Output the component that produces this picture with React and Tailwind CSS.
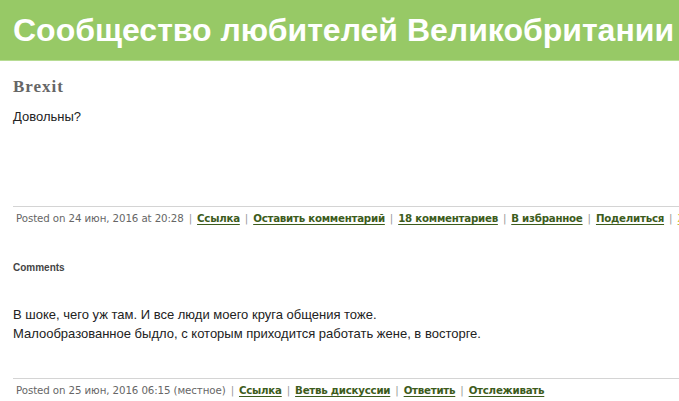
import React from 'react';

const sans = "font-['Liberation_Sans',Arial,sans-serif]";
const verdana = "font-['DejaVu_Sans',Verdana,sans-serif]";

const MetaLink = ({ children, extra }) => (
  <a href="#" className={`font-bold underline underline-offset-2 tracking-[-0.25px] ${extra ? 'text-[#c9c23a]' : 'text-[#3d5c1c]'}`}>
    {children}
  </a>
);

const Sep = () => <span className="px-[5px] text-[#999]">|</span>;

const Meta = ({ posted, links, extra }) => (
  <div className="ml-[13px] border-t border-[#d4d4d4] pt-[4px] pl-[3px] overflow-hidden">
    <div className={`${verdana} text-[10.25px] leading-[14px] text-[#666] whitespace-nowrap tracking-[-0.1px]`}>
      <span>{posted}</span>
      {links.map((l, i) => (
        <React.Fragment key={i}>
          <Sep />
          <MetaLink>{l}</MetaLink>
        </React.Fragment>
      ))}
      {extra && (
        <>
          <Sep />
          <MetaLink extra>{extra}</MetaLink>
        </>
      )}
    </div>
  </div>
);

export default function App() {
  return (
    <div className="w-[679px] h-[401px] overflow-hidden bg-white">
      <header className="h-[61px] bg-[#97c966] border-b border-[#b7dc94] flex items-center pl-[13px]">
        <h1 className={`${sans} text-[32px] font-bold text-white whitespace-nowrap`}>
          Сообщество любителей Великобритании
        </h1>
      </header>

      <div className="pt-[15px]">
        <h2 className="pl-[13px] font-['Liberation_Serif',Georgia,serif] text-[17px] font-bold text-[#666] leading-[22px] tracking-[1px]">
          Brexit
        </h2>
        <p className={`${sans} pl-[13px] pt-[10px] text-[13px] text-[#222] leading-[17px]`}>Довольны?</p>

        <div className="h-[81px]" />

        <Meta
          posted="Posted on 24 июн, 2016 at 20:28"
          links={['Ссылка', 'Оставить комментарий', '18 комментариев', 'В избранное', 'Поделиться']}
          extra="Жалоба"
        />

        <div className={`${sans} pl-[13px] pt-[35px] text-[10px] font-bold text-[#444]`}>Comments</div>

        <div className={`${sans} pl-[13px] pt-[30px] text-[13px] text-[#222] leading-[19px]`}>
          <div>В шоке, чего уж там. И все люди моего круга общения тоже.</div>
          <div>Малообразованное быдло, с которым приходится работать жене, в восторге.</div>
        </div>

        <div className="h-[35px]" />

        <Meta
          posted="Posted on 25 июн, 2016 06:15 (местное)"
          links={['Ссылка', 'Ветвь дискуссии', 'Ответить', 'Отслеживать']}
        />
      </div>
    </div>
  );
}
